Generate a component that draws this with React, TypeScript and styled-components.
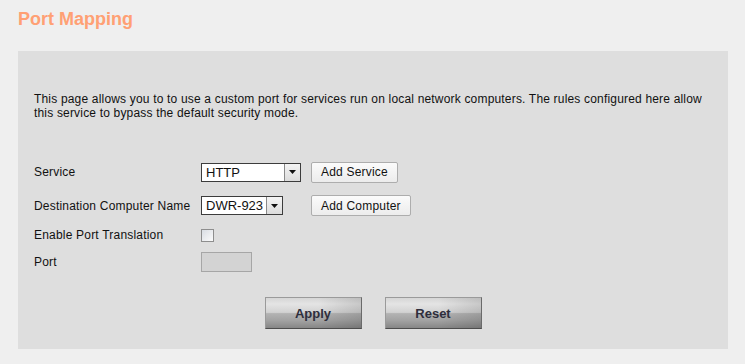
import styled, { createGlobalStyle } from 'styled-components'

const GlobalStyle = createGlobalStyle`
  html, body {
    margin: 0;
    padding: 0;
    background: #efefef;
    font-family: "Liberation Sans", Arial, sans-serif;
  }
`

const Page = styled.div`
  padding: 8px 17px 15px 18px;
`

const Title = styled.h1`
  margin: 0 0 21px;
  font-size: 18px;
  line-height: 22px;
  font-weight: bold;
  color: #ffa074;
`

const Panel = styled.div`
  background: #dedede;
  padding: 41px 16px 20px;
  height: 298px;
  box-sizing: border-box;
  display: flex;
  flex-direction: column;
`

const Intro = styled.p`
  margin: 0 0 37px;
  font-size: 12px;
  line-height: 14px;
  letter-spacing: 0.18px;
  color: #111;
`

const Form = styled.div`
  display: flex;
  flex-direction: column;
`

const Row = styled.div<{ $h: number }>`
  display: grid;
  grid-template-columns: 167px auto auto 1fr;
  align-items: center;
  height: ${(p) => p.$h}px;
`

const Label = styled.span`
  font-size: 12px;
  letter-spacing: 0.2px;
  color: #111;
`

const SelectBox = styled.div<{ $w: number }>`
  display: flex;
  width: ${(p) => p.$w}px;
  height: 19px;
  box-sizing: border-box;
  border: 1px solid #3c3c3c;
  background: #fff;
`

const SelectText = styled.span`
  flex: 1;
  overflow: hidden;
  white-space: nowrap;
  font-size: 13px;
  line-height: 17px;
  padding-left: 4px;
  color: #111;
`

const Arrow = styled.span`
  width: 15px;
  display: flex;
  align-items: center;
  justify-content: center;
  background: linear-gradient(#f4f4f4, #dcdcdc);
  border-left: 1px solid #8a8a8a;
`

const SmallButton = styled.button<{ $gap: number }>`
  margin-left: ${(p) => p.$gap}px;
  height: 21px;
  padding: 0 9px;
  font-family: "Liberation Sans", Arial, sans-serif;
  font-size: 12px;
  letter-spacing: 0.2px;
  color: #111;
  background: linear-gradient(#fbfbfb, #ececec);
  border: 1px solid #adadad;
  border-radius: 2px;
`

const Check = styled.span`
  width: 13px;
  height: 13px;
  box-sizing: border-box;
  border: 1px solid #8e8e8e;
  background: linear-gradient(135deg, #d9dde3, #fbfbfb);
`

const PortInput = styled.input`
  width: 51px;
  height: 20px;
  box-sizing: border-box;
  border: 1px solid #a6a6a6;
  background: #d3d3d3;
  padding: 0;
`

const Actions = styled.div`
  display: flex;
  justify-content: center;
  gap: 23px;
  margin-top: auto;
`

const BigButton = styled.button`
  width: 97px;
  height: 32px;
  font-family: "Liberation Sans", Arial, sans-serif;
  font-size: 13px;
  font-weight: bold;
  color: #2e2e3c;
  border: 1px solid #9a9a9a;
  border-bottom-color: #4d4d4d;
  border-right-color: #6a6a6a;
  background:
    linear-gradient(90deg, rgba(255, 255, 255, 0) 55%, rgba(0, 0, 0, 0.12)),
    linear-gradient(#d6d6d6 0%, #e4e4e4 20%, #d2d2d2 48%, #b3b3b3 52%, #a2a2a2 75%, #868686 100%);
`

function SelectField({ value, width }: { value: string; width: number }) {
  return (
    <SelectBox $w={width}>
      <SelectText>{value}</SelectText>
      <Arrow>
        <svg width="7" height="4" viewBox="0 0 7 4">
          <path d="M0 0h7L3.5 4z" fill="#111" />
        </svg>
      </Arrow>
    </SelectBox>
  )
}

export default function App() {
  return (
    <>
      <GlobalStyle />
      <Page>
        <Title>Port Mapping</Title>
        <Panel>
          <Intro>
            This page allows you to to use a custom port for services run on local network computers. The rules configured here allow
            this service to bypass the default security mode.
          </Intro>
          <Form>
            <Row $h={30}>
              <Label>Service</Label>
              <SelectField value="HTTP" width={100} />
              <SmallButton $gap={10}>Add Service</SmallButton>
            </Row>
            <Row $h={37}>
              <Label>Destination Computer Name</Label>
              <SelectField value="DWR-923" width={82} />
              <SmallButton $gap={28}>Add Computer</SmallButton>
            </Row>
            <Row $h={22}>
              <Label>Enable Port Translation</Label>
              <Check />
            </Row>
            <Row $h={32}>
              <Label>Port</Label>
              <PortInput disabled />
            </Row>
          </Form>
          <Actions>
            <BigButton>Apply</BigButton>
            <BigButton>Reset</BigButton>
          </Actions>
        </Panel>
      </Page>
    </>
  )
}
